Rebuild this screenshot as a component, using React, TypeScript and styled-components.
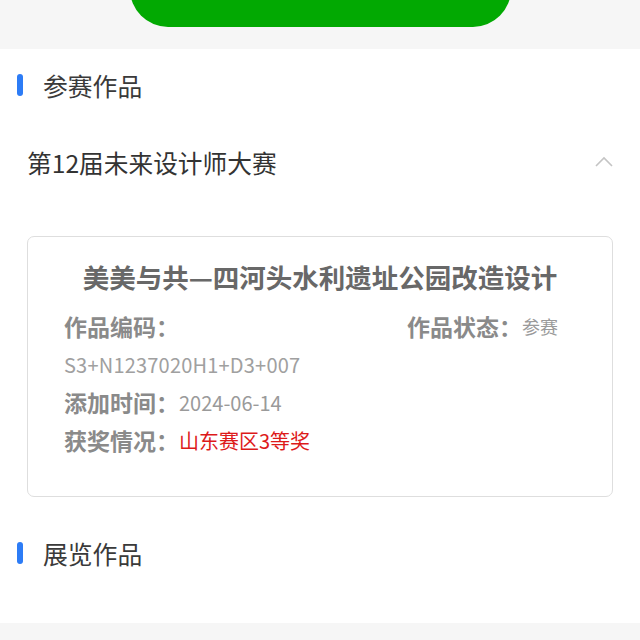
import React from "react";
import styled, { createGlobalStyle } from "styled-components";

const Global = createGlobalStyle`
  html, body { margin: 0; padding: 0; background: #f6f6f6; }
  body { font-family: "Noto Sans CJK SC", "Noto Sans", sans-serif; }
  * { box-sizing: border-box; }
`;

const Page = styled.div`
  width: 640px;
  min-height: 640px;
  background: #f6f6f6;
  display: flex;
  flex-direction: column;
`;

const TopBand = styled.div`
  height: 49px;
  overflow: hidden;
  display: flex;
  justify-content: center;
  background: #f6f6f6;
`;

const GreenButton = styled.button`
  width: 381px;
  height: 76px;
  margin-top: -49px;
  border: none;
  border-radius: 38px;
  background: #02a902;
  color: #ffffff;
  font-family: "Noto Sans CJK SC", sans-serif;
  font-size: 26px;
  line-height: 1;
  padding-bottom: 30px;
  flex-shrink: 0;
`;

const WhitePanel = styled.div`
  background: #ffffff;
  padding-bottom: 34px;
`;

const SectionHeader = styled.div<{ $top?: number }>`
  height: 72px;
  margin-top: ${(p) => p.$top ?? 0}px;
  display: flex;
  align-items: center;
  padding-left: 17px;
  gap: 20px;
`;

const Bar = styled.span`
  width: 6px;
  height: 22px;
  border-radius: 3px;
  background: #2d7cf6;
`;

const SectionTitle = styled.span`
  font-size: 24.8px;
  color: #3a3a3a;
  line-height: 1;
`;

const CompRow = styled.div`
  height: 82px;
  display: flex;
  align-items: center;
  justify-content: space-between;
  padding: 0 26px 0 27px;
`;

const CompName = styled.span`
  font-size: 24.7px;
  color: #333333;
  line-height: 1;
`;

const Chevron = styled.svg`
  width: 20px;
  height: 12px;
  margin-top: -2px;
`;

const Card = styled.div`
  margin: 33px 27px 0 27px;
  border: 1.5px solid #dedede;
  border-radius: 7px;
  padding: 23px 54px 37px 36px;
  height: 261px;
`;

const CardTitle = styled.div`
  text-align: center;
  font-size: 26.5px;
  font-weight: 700;
  color: #686868;
  line-height: 34px;
  margin-left: 4px;
  margin-right: -14px;
  margin-bottom: 13px;
  white-space: nowrap;
`;

const InfoRow = styled.div<{ $spread?: boolean }>`
  height: 38px;
  display: flex;
  align-items: center;
  justify-content: ${(p) => (p.$spread ? "space-between" : "flex-start")};
`;

const Group = styled.div`
  display: flex;
  align-items: center;
`;

const Label = styled.span`
  font-size: 23px;
  font-weight: 700;
  color: #8a8a8a;
`;

const Value = styled.span<{ $color?: string; $size?: number }>`
  font-size: ${(p) => p.$size ?? 20}px;
  color: ${(p) => p.$color ?? "#9a9a9a"};
`;

const Code = styled.span`
  font-size: 20px;
  color: #a0a0a0;
  letter-spacing: 0.2px;
`;

export default function App() {
  return (
    <Page>
      <Global />
      <TopBand>
        <GreenButton>提交</GreenButton>
      </TopBand>
      <WhitePanel>
        <SectionHeader>
          <Bar />
          <SectionTitle>参赛作品</SectionTitle>
        </SectionHeader>
        <CompRow>
          <CompName>第12届未来设计师大赛</CompName>
          <Chevron viewBox="0 0 20 12">
            <polyline points="2,11 10,3 18,11" fill="none" stroke="#c4c4c4" strokeWidth="1.6" />
          </Chevron>
        </CompRow>
        <Card>
          <CardTitle>美美与共—四河头水利遗址公园改造设计</CardTitle>
          <InfoRow $spread>
            <Label>作品编码：</Label>
            <Group>
              <Label>作品状态：</Label>
              <Value $size={18}>参赛</Value>
            </Group>
          </InfoRow>
          <InfoRow>
            <Code>S3+N1237020H1+D3+007</Code>
          </InfoRow>
          <InfoRow>
            <Label>添加时间：</Label>
            <Value>2024-06-14</Value>
          </InfoRow>
          <InfoRow>
            <Label>获奖情况：</Label>
            <Value $color="#dd1a1a">山东赛区3等奖</Value>
          </InfoRow>
        </Card>
        <SectionHeader $top={20}>
          <Bar />
          <SectionTitle>展览作品</SectionTitle>
        </SectionHeader>
      </WhitePanel>
    </Page>
  );
}
